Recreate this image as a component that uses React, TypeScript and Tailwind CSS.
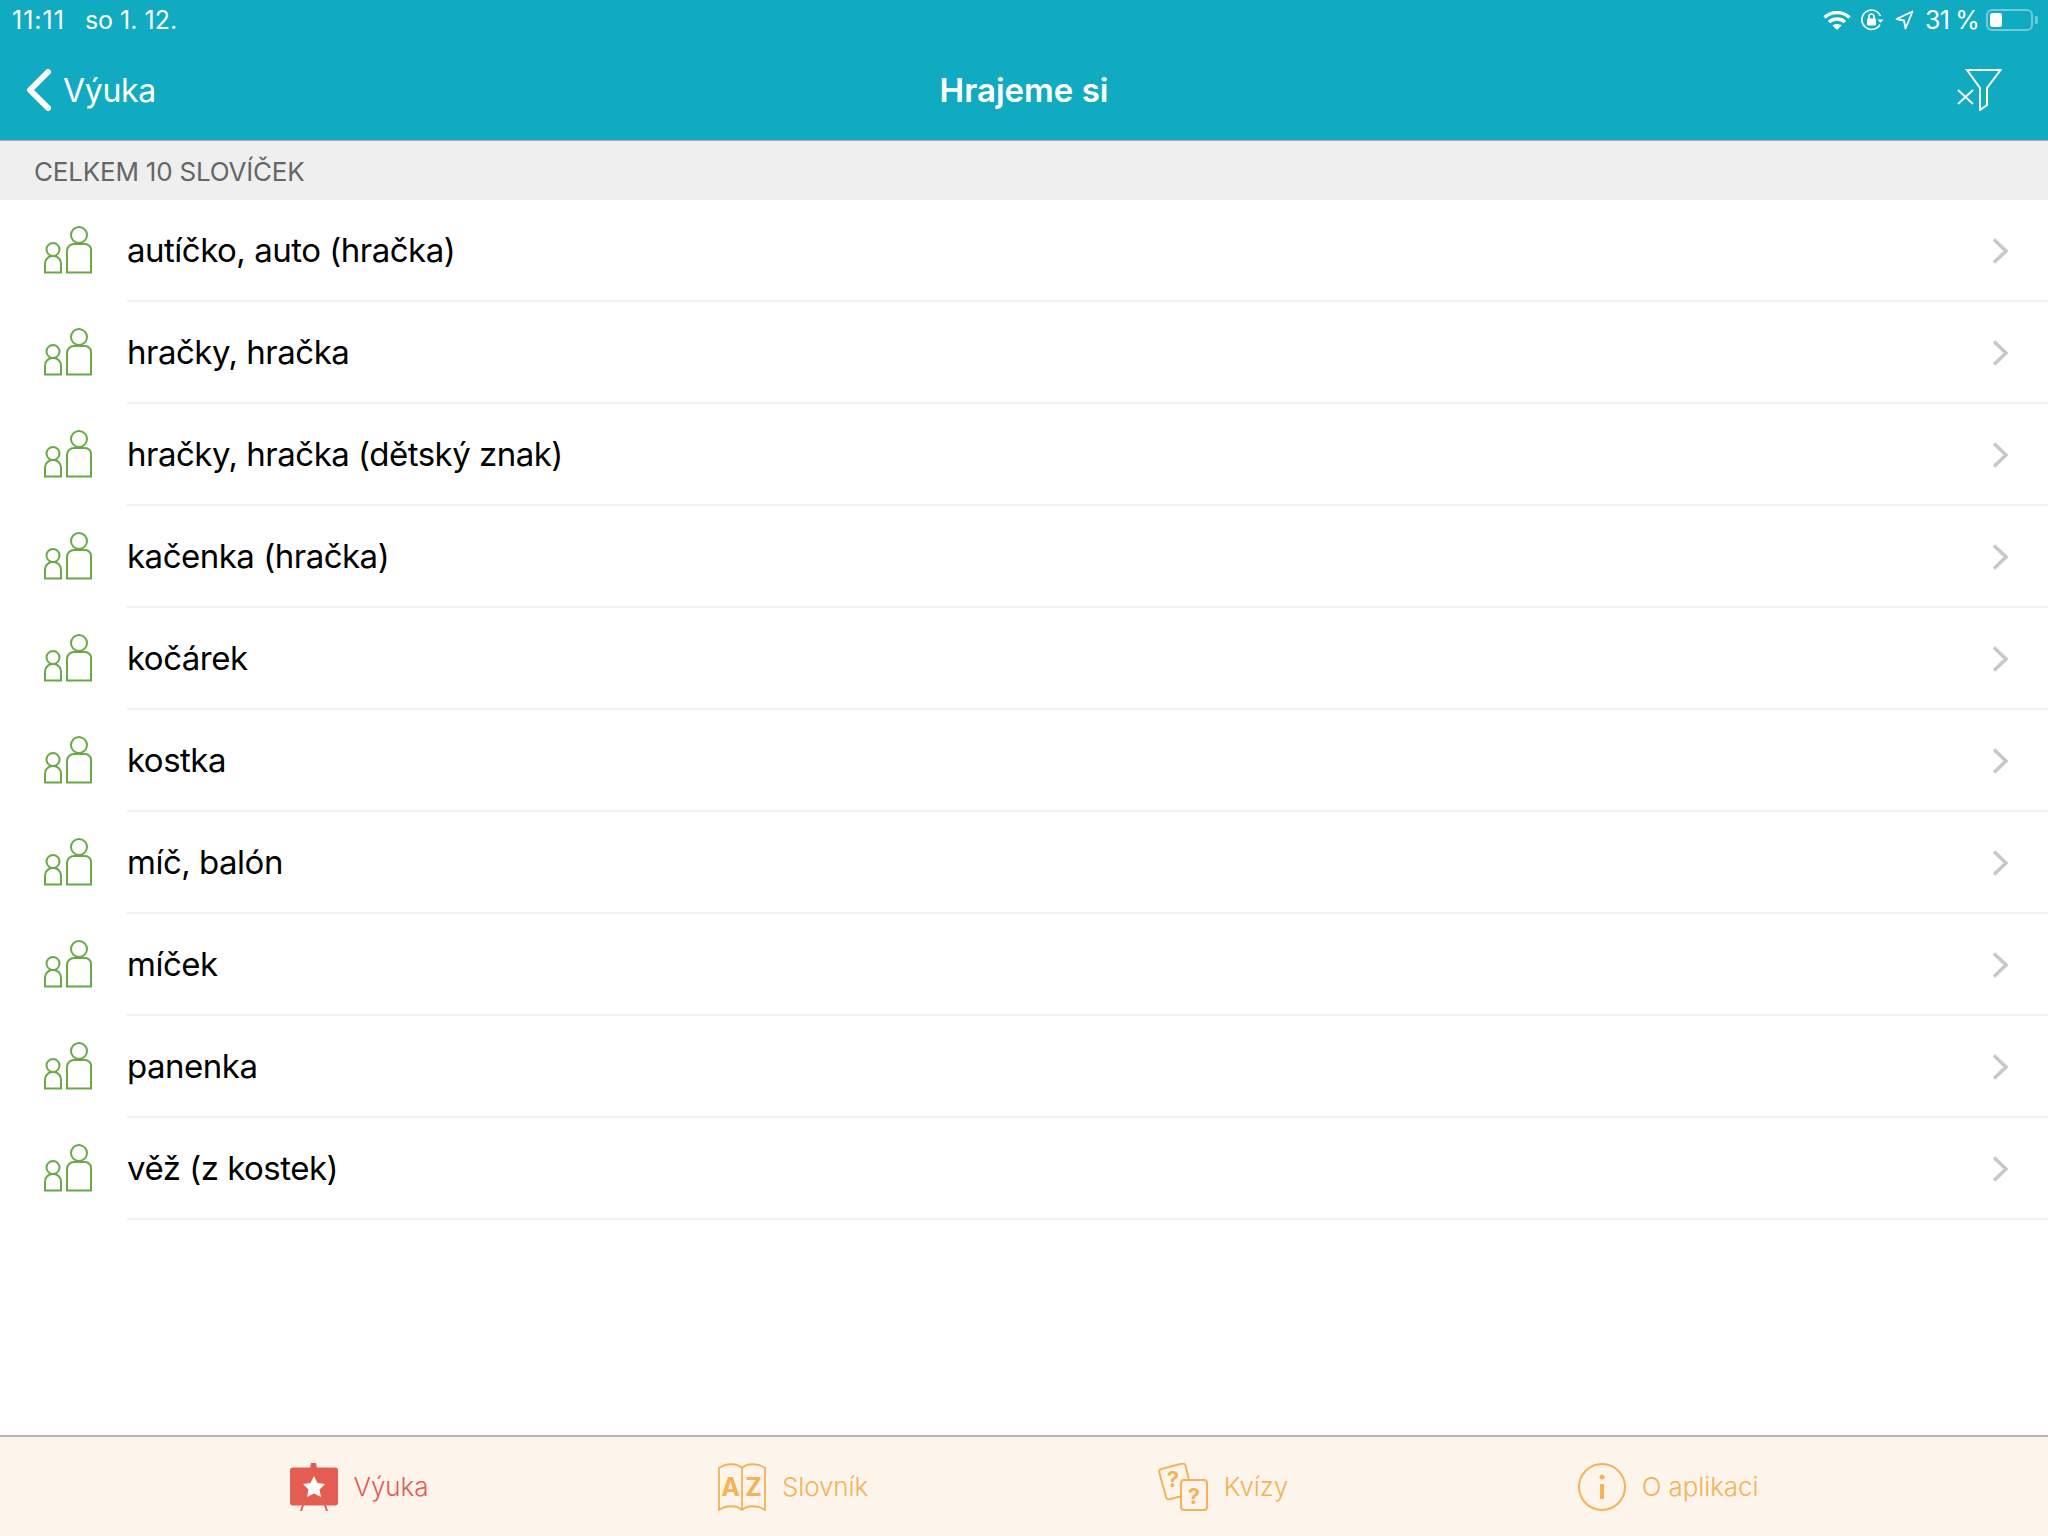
const words = [
  'autíčko, auto (hračka)',
  'hračky, hračka',
  'hračky, hračka (dětský znak)',
  'kačenka (hračka)',
  'kočárek',
  'kostka',
  'míč, balón',
  'míček',
  'panenka',
  'věž (z kostek)',
];

function PeopleIcon() {
  return (
    <svg width="48" height="48" viewBox="0 0 48 48" fill="none" stroke="#6aa846" strokeWidth="2" className="mb-[2px] shrink-0">
      <circle cx="35" cy="9" r="8" />
      <path d="M23 46.500V25a7 7 0 0 1 7-7h11a6 6 0 0 1 6 7V46.500Z" />
      <circle cx="9" cy="23.500" r="6.500" />
      <path d="M1 46.500V37.500a7.500 7.500 0 0 1 7.500-7.500h1a7.500 7.500 0 0 1 7.500 7.500v9Z" />
    </svg>
  );
}

function Chevron() {
  return (
    <svg width="16" height="26" viewBox="0 0 16 26" fill="none" stroke="#c7c7cc" strokeWidth="3.500" className="mt-[2px]">
      <path d="M2 1.500 14 13 2 24.500" />
    </svg>
  );
}

function StatusIcons() {
  return (
    <div className="flex items-center text-[25px] leading-none text-white">
      <svg width="28" height="20" viewBox="0 0 28 20" className="mr-[10px]" fill="none" stroke="#fff" strokeWidth="3.400">
        <path d="M1.500 7.500C8.500 1 19.500 1 26.500 7.500" />
        <path d="M6 12c4.500-4 11.500-4 16 0" />
        <path d="M14 20 9.500 15.500c2.500-2 6.500-2 9 0Z" fill="#fff" stroke="none" />
      </svg>
      <svg width="24" height="22" viewBox="0 0 24 22" className="mr-[10px]" fill="none" stroke="#fff" strokeWidth="1.600">
        <path d="M19 15.500A9.700 9.700 0 1 1 19.500 7" />
        <path d="M16.500 10.500h6l-3 3.500Z" fill="#fff" stroke="none" />
        <rect x="6" y="9.500" width="9" height="7" rx="1" fill="#fff" stroke="none" />
        <path d="M8 10V7.500a2.500 2.500 0 0 1 5 0V10" />
      </svg>
      <svg width="19" height="20" viewBox="0 0 19 20" className="mr-[11px]" fill="none" stroke="#fff" strokeWidth="1.800">
        <path d="M17.500 1.500 1.500 9l7.500 1.500L10.500 18.500Z" strokeLinejoin="round" />
      </svg>
      <span className="mr-[7px] w-[54px] whitespace-nowrap tracking-[-0.8px]">31 %</span>
      <div className="flex items-center">
        <div className="flex h-[22px] w-[47px] items-center rounded-[6px] border-2 border-[#6fcbd8] pl-[2px]">
          <div className="h-[14px] w-[12px] rounded-[2px] bg-white" />
        </div>
        <div className="ml-[2px] h-[8px] w-[3px] rounded-r-[2px] bg-[#6fcbd8]" />
      </div>
    </div>
  );
}

function FilterIcon() {
  return (
    <svg width="45" height="42" viewBox="0 0 45 42" fill="none" stroke="#fff" strokeWidth="2">
      <path d="M10 1H43.500L30 19V36L23 41V19Z" />
      <path d="M1 21 16 35M16 21 1 35" strokeWidth="1.800" />
    </svg>
  );
}

function VyukaIcon() {
  return (
    <svg width="48" height="48" viewBox="0 0 48 48" className="shrink-0">
      <path d="M21 0h5l1 5h-7Z" fill="#e35d50" />
      <rect y="4.500" width="48" height="38" rx="3" fill="#e35d50" />
      <path d="M13 42 11 48M35 42 37 48" stroke="#e35d50" strokeWidth="2" />
      <polygon points="24,13 27.500,20 35,21 29.500,26.500 31,34 24,30.500 17,34 18.500,26.500 13,21 20.500,20" fill="#fff" />
    </svg>
  );
}

function SlovnikIcon() {
  return (
    <svg width="48" height="48" viewBox="0 0 48 48" fill="none" stroke="#f4b259" strokeWidth="1.800" className="shrink-0">
      <path d="M24 5C19 0 8 0 1 5V47C8 42 19 42 24 47C29 42 40 42 47 47V5C40 0 29 0 24 5V47" />
      <text x="12.500" y="33" textAnchor="middle" fontSize="25" fontWeight="700" fill="#f4b259" stroke="none" fontFamily="Inter, sans-serif">A</text>
      <text x="35.500" y="33" textAnchor="middle" fontSize="25" fontWeight="700" fill="#f4b259" stroke="none" fontFamily="Inter, sans-serif">Z</text>
    </svg>
  );
}

function KvizyIcon() {
  return (
    <svg width="50" height="48" viewBox="0 0 50 48" fill="none" stroke="#f4b259" strokeWidth="2" className="shrink-0">
      <path d="M31 17 27.500 2.500a3 3 0 0 0-3.500-2L3.500 6a3 3 0 0 0-2.200 3.500L8 34a3 3 0 0 0 3.500 2.200L22 33.500" />
      <rect x="23" y="17" width="26" height="30" rx="3" />
      <text x="15" y="24" textAnchor="middle" fontSize="22" fontWeight="700" fill="#f4b259" stroke="none" fontFamily="Inter, sans-serif">?</text>
      <text x="36" y="41" textAnchor="middle" fontSize="22" fontWeight="700" fill="#f4b259" stroke="none" fontFamily="Inter, sans-serif">?</text>
    </svg>
  );
}

function InfoIcon() {
  return (
    <svg width="48" height="48" viewBox="0 0 48 48" fill="none" stroke="#f4b259" strokeWidth="2" className="shrink-0">
      <circle cx="24" cy="24" r="23" />
      <circle cx="24" cy="14" r="2.500" fill="#f4b259" stroke="none" />
      <rect x="22" y="21" width="4" height="15" fill="#f4b259" stroke="none" />
    </svg>
  );
}

const tabs = [
  { label: 'Výuka', icon: VyukaIcon, active: true },
  { label: 'Slovník', icon: SlovnikIcon, active: false },
  { label: 'Kvízy', icon: KvizyIcon, active: false },
  { label: 'O aplikaci', icon: InfoIcon, active: false },
];

export default function App() {
  return (
    <div className="flex h-[1536px] w-[2048px] flex-col overflow-hidden bg-white font-['Inter',sans-serif]">
      {/* Header */}
      <header className="h-[141px] shrink-0 border-b border-[#aaaaaa] bg-[#10abc0] text-white">
        <div className="flex h-[40px] items-center justify-between pl-[12px] pr-[10px]">
          <div className="flex gap-[20px] text-[25px] leading-none">
            <span className="tracking-[1px]">11:11</span>
            <span>so 1. 12.</span>
          </div>
          <StatusIcons />
        </div>
        <div className="flex h-[100px] items-center justify-between px-[26px]">
          <div className="flex w-[300px] items-center gap-[12px]">
            <svg width="25" height="42" viewBox="0 0 25 42" fill="none" stroke="#fff" strokeWidth="6" strokeLinecap="round" strokeLinejoin="round">
              <path d="M22 3 4 21l18 18" />
            </svg>
            <span className="pt-[2px] text-[32px] leading-none tracking-[-0.3px]">Výuka</span>
          </div>
          <h1 className="text-[33px] font-semibold leading-none">Hrajeme si</h1>
          <div className="flex w-[300px] justify-end pr-[20px]">
            <FilterIcon />
          </div>
        </div>
      </header>

      {/* Section title */}
      <div className="flex h-[59px] shrink-0 items-center bg-[#efefef] pl-[34px] pt-[2px] text-[26px] tracking-[-0.2px] text-[#666666]">
        CELKEM 10 SLOVÍČEK
      </div>

      {/* Words */}
      <ul className="flex-1">
        {words.map((word) => (
          <li key={word} className="flex h-[102px] items-center pl-[44px]">
            <PeopleIcon />
            <div className="ml-[35px] flex h-full flex-1 items-center justify-between border-b-2 border-[#f1f1f1] pr-[40px]">
              <span className="pt-[2px] text-[33px] tracking-[-0.5px] text-black">{word}</span>
              <Chevron />
            </div>
          </li>
        ))}
      </ul>

      {/* Tab bar */}
      <nav className="flex h-[101px] shrink-0 items-center justify-evenly border-t-2 border-[#b5b5b5] bg-[#fdf4eb]">
        {tabs.map((tab) => {
          const Icon = tab.icon;
          return (
            <div key={tab.label} className="flex items-center gap-[16px]">
              <Icon />
              <span className={`text-[26px] font-light tracking-[-0.1px] ${tab.active ? 'text-[#e35d50]' : 'text-[#f4b259]'}`}>
                {tab.label}
              </span>
            </div>
          );
        })}
      </nav>
    </div>
  );
}
